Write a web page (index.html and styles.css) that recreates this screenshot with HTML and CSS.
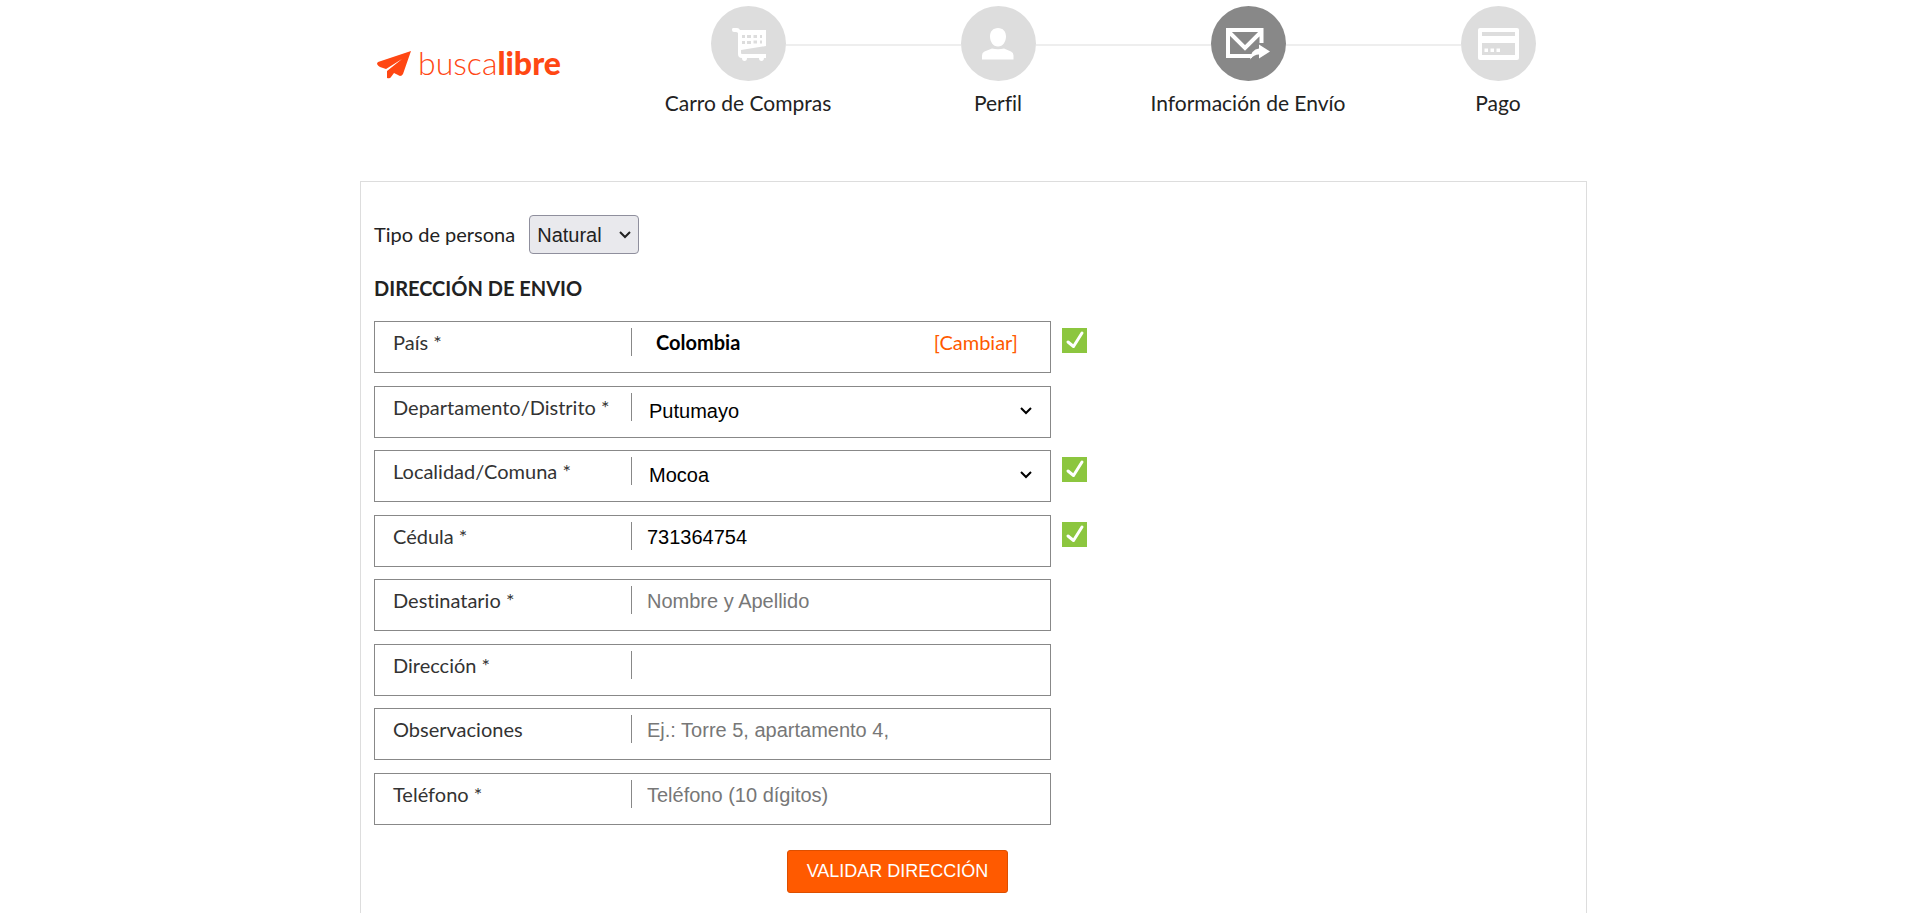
FILE: index.html
```html
<!DOCTYPE html>
<html lang="es">
<head>
<meta charset="utf-8">
<meta name="viewport" content="width=device-width, initial-scale=1">
<title>Buscalibre - Información de Envío</title>
<link rel="stylesheet" href="styles.css">
</head>
<body>
<header class="header">
  <a class="logo" href="#" aria-label="buscalibre">
    <svg class="logo-mark" viewBox="0 0 34 28" aria-hidden="true"><path d="M34 0 L1 11 Q0 12 0 13 Q1 15 3 16 L9 18 L25 8 L10 20 L10 27 Q13 28 14 26 L17 22 L23 25 Q25 25 26 23 Z"/></svg>
    <span class="logo-text">busca<b>libre</b></span>
  </a>
  <ol class="steps">
    <li class="step">
      <div class="step-track">
        <span class="step-circle">
          <svg viewBox="0 0 75 75" aria-hidden="true">
            <path fill="#fff" d="M22 22h4q2 0 3 2h26v16l-25 4v3q0 1 1 1h24v4h-2q0 3-2.500 3t-2.500-3h-12q0 3-2.500 3t-2.500-3q-4 0-4-4V27q-1-1-2-1h-2q-2 0-2-2t1-2z"/>
            <path class="holes" d="M31 29h3v3h-3zM36 29h4v3h-4zM42.500 29h3.500v3h-3.500zM49 29h2v3h-2zM31 35h3v3h-3zM36 35h4v3h-4zM42.500 34.500h3.500v3h-3.500zM49 34.500h2v3h-2z"/>
          </svg>
        </span>
      </div>
      <span class="step-label">Carro de Compras</span>
    </li>
    <li class="step">
      <div class="step-track">
        <span class="step-circle">
          <svg viewBox="0 0 75 75" aria-hidden="true"><path fill="#fff" d="M37 22c5 0 8 3.500 8 8.500s-3 10-8 10-8-5-8-10 3-8.500 8-8.500zM31 42.500q6 1.500 12 0l7 3q2.500 1 2.500 4V53.500H21V49.500q0-3 2.500-4z"/></svg>
        </span>
      </div>
      <span class="step-label">Perfil</span>
    </li>
    <li class="step step-active" aria-current="step">
      <div class="step-track">
        <span class="step-circle">
          <svg viewBox="0 0 75 75" aria-hidden="true">
            <path fill="none" stroke="#fff" stroke-width="4" d="M41 50H17V24H50.500V37M17 25l17 17 17-17"/>
            <path fill="#fff" d="M48 38.500l11 7-11 7v-4q-5 0-9 5 1-10 9-11z"/>
          </svg>
        </span>
      </div>
      <span class="step-label">Información de Envío</span>
    </li>
    <li class="step">
      <div class="step-track">
        <span class="step-circle">
          <svg viewBox="0 0 75 75" aria-hidden="true"><path fill="#fff" fill-rule="evenodd" d="M19 22h37q2 0 2 2v28q0 2-2 2H19q-2 0-2-2V24q0-2 2-2zM21 26v4h33v-4zM21 37v12h33V37zM23.500 42.500h3.500v3.500h-3.500zM29.500 42.500h3.500v3.500h-3.500zM35.500 42.500h3.500v3.500h-3.500z"/></svg>
        </span>
      </div>
      <span class="step-label">Pago</span>
    </li>
  </ol>
</header>

<main class="panel">
  <form class="form">
    <div class="person">
      <label for="tipo">Tipo de persona</label>
      <select class="person-select" id="tipo"><option>Natural</option><option>Jurídica</option></select>
    </div>
    <h2 class="title">DIRECCIÓN DE ENVIO</h2>

    <div class="row">
      <div class="field">
        <span class="label">País *</span>
        <div class="country"><strong>Colombia</strong><a class="change" href="#">[Cambiar]</a></div>
      </div>
      <svg class="valid" viewBox="0 0 25 25" role="img" aria-label="Válido"><path fill="#8cc63f" d="M0 0h25v25H0z"/><path class="tick" d="M6 14l5.500 4.500L20 5"/></svg>
    </div>
    <div class="row">
      <div class="field">
        <label class="label" for="departamento">Departamento/Distrito *</label>
        <select class="control select" id="departamento"><option>Putumayo</option></select>
      </div>
    </div>
    <div class="row">
      <div class="field">
        <label class="label" for="localidad">Localidad/Comuna *</label>
        <select class="control select" id="localidad"><option>Mocoa</option></select>
      </div>
      <svg class="valid" viewBox="0 0 25 25" role="img" aria-label="Válido"><path fill="#8cc63f" d="M0 0h25v25H0z"/><path class="tick" d="M6 14l5.500 4.500L20 5"/></svg>
    </div>
    <div class="row">
      <div class="field">
        <label class="label" for="cedula">Cédula *</label>
        <input class="control" id="cedula" type="text" value="731364754">
      </div>
      <svg class="valid" viewBox="0 0 25 25" role="img" aria-label="Válido"><path fill="#8cc63f" d="M0 0h25v25H0z"/><path class="tick" d="M6 14l5.500 4.500L20 5"/></svg>
    </div>
    <div class="row">
      <div class="field">
        <label class="label" for="destinatario">Destinatario *</label>
        <input class="control" id="destinatario" type="text" placeholder="Nombre y Apellido">
      </div>
    </div>
    <div class="row">
      <div class="field">
        <label class="label" for="direccion">Dirección *</label>
        <input class="control" id="direccion" type="text">
      </div>
    </div>
    <div class="row">
      <div class="field">
        <label class="label" for="observaciones">Observaciones</label>
        <input class="control" id="observaciones" type="text" placeholder="Ej.: Torre 5, apartamento 4,">
      </div>
    </div>
    <div class="row">
      <div class="field">
        <label class="label" for="telefono">Teléfono *</label>
        <input class="control" id="telefono" type="tel" placeholder="Teléfono (10 dígitos)">
      </div>
    </div>

    <div class="actions"><button class="submit" type="button">VALIDAR DIRECCIÓN</button></div>
  </form>
</main>
</body>
</html>
```
FILE: styles.css
```css
* {
  box-sizing: border-box;
}

body {
  display: flex;
  flex-direction: column;
  min-height: 100vh;
  margin: 0;
  background: #fff;
  color: #222;
  font-family: Lato, sans-serif;
  font-size: 20px;
  line-height: 28px;
  font-variant-ligatures: none;
}

/* Header */
.header {
  display: flex;
  align-items: flex-start;
  margin-left: 18.75%;
  padding-top: 6px;
}

.logo {
  display: flex;
  flex: 0 0 263px;
  gap: 7px;
  padding: 39px 0 0 17px;
  color: #ff4713;
  text-decoration: none;
}

.logo-mark {
  width: 34px;
  height: 28px;
  margin-top: 6px;
  fill: currentColor;
}

.logo-text {
  font-size: 32px;
  font-weight: 300;
  line-height: 36px;
}

.logo-text b {
  font-weight: 900;
}

.steps {
  display: grid;
  grid-template-columns: repeat(4, 1fr);
  flex: 1;
  max-width: 1000px;
  margin: 0;
  padding: 0;
  list-style: none;
}

.step {
  text-align: center;
}

.step-track {
  display: flex;
  align-items: center;
}

.step-track::before,
.step-track::after {
  content: "";
  flex: 1;
  height: 2px;
  margin-top: 2px;
  background: #eee;
}

.step:first-child .step-track::before,
.step:last-child .step-track::after {
  background: none;
}

.step-circle {
  width: 75px;
  height: 75px;
  border-radius: 50%;
  background: #ddd;
}

.step-circle svg {
  display: block;
}

.holes {
  fill: #ddd;
}

.step-active .step-circle {
  background: #888;
}

.step-label {
  display: block;
  margin-top: 8px;
  font-size: 21px;
}

/* Form panel */
.panel {
  flex: 1;
  max-width: 1227px;
  width: 64%;
  margin: 64px 0 0 18.75%;
  padding: 33px 13px 16px;
  border: 1px solid #ddd;
  border-bottom: 0;
}

.person {
  display: flex;
  align-items: center;
  gap: 14px;
}

.person label {
  padding-bottom: 2px;
}

.person-select {
  width: 110px;
  height: 39px;
  padding: 0 7px;
  border: 1px solid #8f8f9d;
  border-radius: 4px;
  background: #e9e9ed url("data:image/svg+xml,%3Csvg xmlns='http://www.w3.org/2000/svg' width='12' height='8'%3E%3Cpath d='M1 1l5 5 5-5' fill='none' stroke='%23222' stroke-width='2'/%3E%3C/svg%3E") no-repeat right 7px center;
  color: #222;
  font: 20px "Liberation Sans", Arial, sans-serif;
  appearance: none;
}

.title {
  margin: 20px 0 19px;
  font-size: 20px;
  font-weight: 700;
  line-height: 28px;
}

.row {
  display: flex;
  gap: 11px;
  margin-bottom: 12px;
}

.row:nth-of-type(even) {
  margin-bottom: 13px;
}

.field {
  display: flex;
  flex: 0 1 677px;
  height: 52px;
  padding: 6px 14px 0 18px;
  border: 1px solid #888;
}

.label {
  flex: 0 0 239px;
  height: 28px;
  border-right: 1px solid #888;
  color: #333;
}

.control {
  flex: 1;
  min-width: 0;
  height: 30px;
  padding: 0 0 0 15px;
  border: 0;
  background: none;
  color: #000;
  font: 20px "Liberation Sans", Arial, sans-serif;
}

.control::placeholder {
  color: #777;
}

.select {
  height: 36px;
  padding-left: 17px;
  background: url("data:image/svg+xml,%3Csvg xmlns='http://www.w3.org/2000/svg' width='12' height='8'%3E%3Cpath d='M1 1l5 5 5-5' fill='none' stroke='%23000' stroke-width='2'/%3E%3C/svg%3E") no-repeat right 4px center;
  appearance: none;
}

.country {
  display: flex;
  flex: 1;
  justify-content: space-between;
  padding: 0 18px 0 24px;
  color: #000;
}

.change {
  color: #ff5a00;
  text-decoration: none;
}

.valid {
  width: 25px;
  height: 25px;
  margin-top: 7px;
}

.tick {
  fill: none;
  stroke: #fff;
  stroke-width: 3;
  stroke-linecap: round;
  stroke-linejoin: round;
}

.actions {
  margin-top: 25px;
  padding-left: 413px;
}

.submit {
  display: block;
  width: 221px;
  height: 43px;
  padding: 0;
  border: 1px solid #dd4f00;
  border-radius: 3px;
  background: #ff5a00;
  color: #fff;
  font: 18px "Liberation Sans", Arial, sans-serif;
}
```
